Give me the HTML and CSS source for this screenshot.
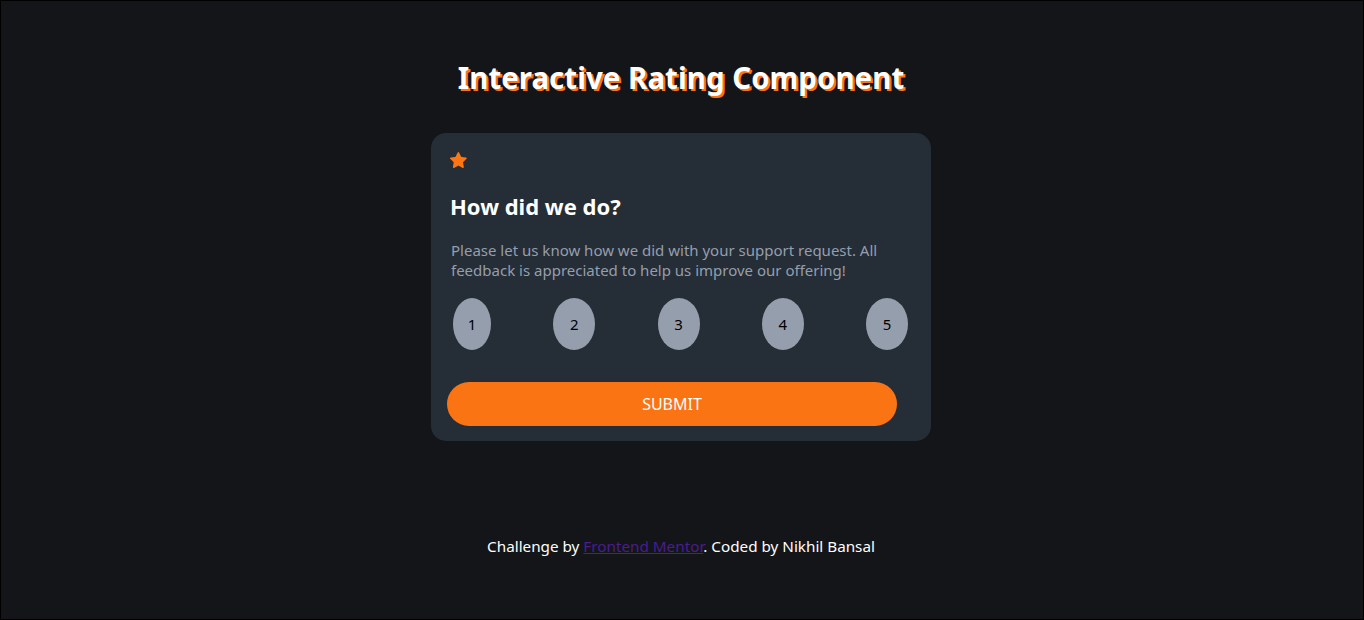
FILE: index.html
```html
<!DOCTYPE html>
<html lang="en">
<head>
<meta charset="utf-8">
<title>Interactive Rating Component</title>
<link rel="stylesheet" href="styles.css">
</head>
<body>
<main class="page">
  <h1 class="title">Interactive Rating Component</h1>
  <section class="card">
    <svg class="star" width="17" height="16" viewBox="0 0 17 16" aria-hidden="true">
      <path fill="#FC7614" d="M9.067.43l1.990 4.031c.112.228.33.386.58.422l4.45.647a.772.772 0 01.427 1.316l-3.22 3.138a.773.773 0 00-.222.683l.76 4.431a.772.772 0 01-1.12.813l-3.98-2.092a.773.773 0 00-.718 0l-3.98 2.092a.772.772 0 01-1.119-.813l.76-4.431a.77.77 0 00-.222-.683L.233 6.846A.772.772 0 01.661 5.53l4.449-.647a.772.772 0 00.58-.422L7.68.43a.774.774 0 011.387 0z"/>
    </svg>
    <h2 class="heading">How did we do?</h2>
    <p class="text">Please let us know how we did with your support request. All feedback is appreciated to help us improve our offering!</p>
    <div class="ratings">
      <button class="rate rate-narrow">1</button>
      <button class="rate">2</button>
      <button class="rate">3</button>
      <button class="rate">4</button>
      <button class="rate">5</button>
    </div>
    <button class="submit">SUBMIT</button>
  </section>
  <footer class="attribution">Challenge by <a href="#">Frontend Mentor</a>. Coded by Nikhil Bansal</footer>
</main>
</body>
</html>
```
FILE: styles.css
```css
* { box-sizing: border-box; }
html, body { height: 100%; }
body {
  margin: 0;
  background: #131518;
  border: 1px solid #000;
  font-family: "Noto Sans", "Liberation Sans", sans-serif;
  color: #fff;
}
.page {
  display: flex;
  flex-direction: column;
  align-items: center;
  padding: 57px 2px 0 0;
}
.title {
  margin: 0;
  font-size: 29.5px;
  line-height: 40px;
  font-weight: 700;
  color: #fff;
  text-shadow: 2px 2px 0 #fb7413;
}
.card {
  margin-top: 35px;
  width: 500px;
  height: 308px;
  background: #252d37;
  border-radius: 15px;
  padding: 19px 20px 0 20px;
  display: flex;
  flex-direction: column;
}
.star { display: block; margin-left: -1px; }
.heading {
  margin: 23px 0 0 -1px;
  font-size: 22px;
  line-height: 30px;
  font-weight: 700;
}
.text {
  margin: 19px 0 0 0;
  font-size: 15px;
  line-height: 20px;
  color: #959eac;
}
.ratings {
  margin-top: 18px;
  display: flex;
  justify-content: space-between;
  padding: 0 3px 0 2px;
}
.rate {
  width: 42px;
  height: 52px;
  border: 0;
  border-radius: 50%;
  background: #959eac;
  color: #000;
  font-family: inherit;
  font-size: 15px;
  padding: 0;
}
.rate-narrow { width: 38px; }
.submit {
  margin: 32px 0 0 -4px;
  width: 450px;
  height: 44px;
  border: 0;
  border-radius: 22px;
  background: #fb7413;
  color: #fff;
  font-family: inherit;
  font-size: 16px;
}
.attribution {
  margin-top: 93px;
  font-size: 15.25px;
  line-height: 24px;
}
.attribution a { color: #4b1d91; }
```
